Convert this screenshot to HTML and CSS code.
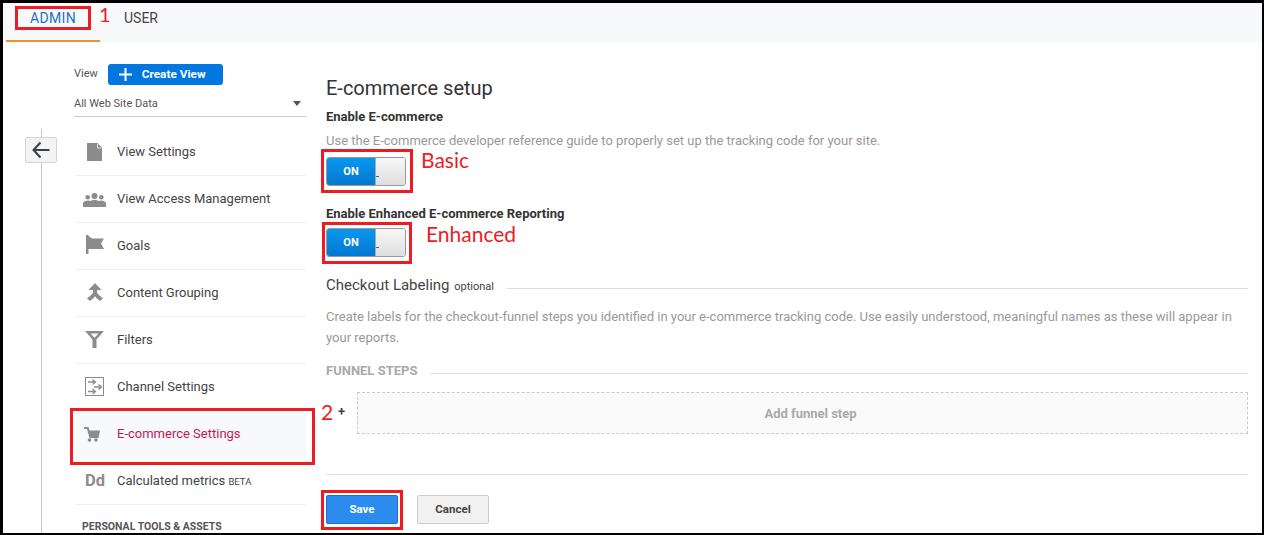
FILE: index.html
```html
<!DOCTYPE html>
<html lang="en">
<head>
	<meta charset="UTF-8">
	<title>E-commerce setup</title>
	<link rel="stylesheet" href="styles.css">
</head>
<body>
	<div class="frame">
		<div class="tabs">
			<a class="tab tab-on" href="#">ADMIN</a>
			<a class="tab tab-user" href="#">USER</a>
		</div>
		<div class="page">
			<div class="rail">
				<div class="rail-line"></div>
				<button class="back">
					<svg width="18" height="18" viewBox="0 0 18 18"><path d="M8.500 1.500 1.500 9l7 7.500M1.500 9H17.500" fill="none" stroke="#3c4043" stroke-width="2"/></svg>
				</button>
			</div>
			<div class="side">
				<div class="view-head">
					<span class="view-label">View</span>
					<a class="create" href="#">
						<svg width="13" height="13" viewBox="0 0 13 13"><path d="M6.500 0v13M0 6.500h13" stroke="#fff" stroke-width="2"/></svg>
						Create View
					</a>
				</div>
				<div class="select"><span>All Web Site Data</span><i class="caret"></i></div>
				<ul class="menu">
					<li>
						<svg class="ico" viewBox="0 0 24 20"><path d="M4 1h10.500L19 5.500V19H4z" fill="#8c8c8c"/><path d="M14.500 2v4H18" fill="none" stroke="#e6e6e6"/></svg>
						View Settings
					</li>
					<li>
						<svg class="ico" viewBox="0 0 24 20"><g fill="#8c8c8c"><circle cx="11.500" cy="7" r="3"/><circle cx="4.700" cy="8.300" r="2.300"/><circle cx="18.300" cy="8.300" r="2.300"/><path d="M0 18v-3.500C0 12.500 2.500 11.500 5 11.500c1 0 2 .2 2.500.5 1-.6 2.500-1 4-1s3 .4 4 1c.5-.3 1.500-.5 2.500-.5 2.500 0 5 1 5 3V18z"/></g></svg>
						View Access Management
					</li>
					<li>
						<svg class="ico" viewBox="0 0 24 20"><path d="M3 -1h2.500v1L9 2.500h12l-3 5 3 5.500H5.500v5H3z" fill="#8c8c8c"/></svg>
						Goals
					</li>
					<li>
						<svg class="ico" viewBox="0 0 24 20"><path d="M12 0l6.500 7H14v2.500c1 2 3 3.500 6 6L17 18c-2-1.500-4-3-5-5-1 2-3 3.500-5 5l-3-2.500c3-2.500 5-4 6-6V7H5.500z" fill="#8c8c8c"/></svg>
						Content Grouping
					</li>
					<li>
						<svg class="ico" viewBox="0 0 24 20"><path d="M2 1h19l-7.500 8.500V18h-4V9.500zM7.500 3.500l4 4.300 4-4.300z" fill="#8c8c8c" fill-rule="evenodd"/></svg>
						Filters
					</li>
					<li>
						<svg class="ico" viewBox="0 0 24 20"><rect x="2.500" y=".5" width="18" height="18" fill="none" stroke="#8c8c8c"/><path d="M5 5h7M9.500 2.500 12.500 5l-3 2.500M11 10h7M15.500 7.500 18.500 10l-3 2.500M5 14.500h7M9.500 12 12.500 14.500 9.500 17" fill="none" stroke="#8c8c8c" stroke-width="1.300"/></svg>
						Channel Settings
					</li>
					<li class="on">
						<svg class="ico" viewBox="0 0 24 20"><path d="M1 3h4.500l1 3.500H17L15.500 14h-9L4 5H1z" fill="#8c8c8c"/><circle cx="6.500" cy="16" r="1.800" fill="#8c8c8c"/><circle cx="13" cy="16" r="1.800" fill="#8c8c8c"/></svg>
						E-commerce Settings
					</li>
					<li>
						<span class="dd">Dd</span>
						<span>Calculated metrics <small>BETA</small></span>
					</li>
				</ul>
				<div class="tools">PERSONAL TOOLS &amp; ASSETS</div>
			</div>
			<div class="main">
				<h1>E-commerce setup</h1>
				<h2>Enable E-commerce</h2>
				<p class="hint">Use the E-commerce developer reference guide to properly set up the tracking code for your site.</p>
				<div class="toggle"><b>ON</b><span><i></i></span></div>
				<h2 class="second">Enable Enhanced E-commerce Reporting</h2>
				<div class="toggle"><b>ON</b><span><i></i></span></div>
				<div class="rule-head label-row"><span>Checkout Labeling <small>optional</small></span><i></i></div>
				<p class="hint wrap">Create labels for the checkout-funnel steps you identified in your e-commerce tracking code. Use easily understood, meaningful names as these will appear in your reports.</p>
				<div class="rule-head funnel-row"><strong>FUNNEL STEPS</strong><i></i></div>
				<div class="step-row">
					<span class="plus">+</span>
					<div class="add-step">Add funnel step</div>
				</div>
				<div class="actions">
					<button class="btn btn-save">Save</button>
					<button class="btn">Cancel</button>
				</div>
			</div>
		</div>

		<div class="mark m-admin"></div>
		<div class="mark m-side"></div>
		<div class="mark m-tog1"></div>
		<div class="mark m-tog2"></div>
		<div class="mark m-save"></div>
		<span class="note n-1">1</span>
		<span class="note n-2">2</span>
		<span class="note n-basic">Basic</span>
		<span class="note n-enh">Enhanced</span>
	</div>
</body>
</html>
```
FILE: styles.css
```css
* { box-sizing: border-box; margin: 0; padding: 0; }
html, body { height: 100%; }
body { font-family: Roboto, "Liberation Sans", sans-serif; color: #444; background: #000; overflow: hidden; }
ul { list-style: none; }
a { text-decoration: none; color: inherit; }

.frame { position: relative; width: 1264px; height: 535px; border: solid #000; border-width: 3px 2px 2px 3px; background: #fff; overflow: hidden; }

.tabs { display: flex; height: 39px; padding-left: 3px; background: #f8f9fa; }
.tab { width: 94px; font-size: 14px; line-height: 31px; text-align: center; color: #444; }
.tab-on { height: 39px; color: #1a73c8; letter-spacing: .3px; border-bottom: 2px solid #f98d2b; }
.tab-user { width: 82px; }

.page { display: flex; }
.rail { position: relative; width: 71px; flex: none; }
.rail-line { position: absolute; left: 38px; top: 87px; width: 1px; height: 420px; background: #c8c8c8; }
.back { position: absolute; left: 22px; top: 95px; width: 32px; height: 26px; display: flex; align-items: center; justify-content: center; background: #f3f3f3; border: 1px solid #d4d4d4; border-radius: 2px; }

.side { width: 232px; padding-top: 22px; flex: none; }
.view-head { display: flex; align-items: center; gap: 10px; height: 21px; }
.view-label { padding-bottom: 2px; font-size: 11px; color: #555; }
.create { display: flex; align-items: center; gap: 10px; width: 115px; height: 21px; padding: 0 0 1px 11px; font-size: 11.800px; font-weight: 700; color: #fff; background: #0277e0; border-radius: 3px; }
.select { display: flex; justify-content: space-between; align-items: center; height: 32px; padding: 5px 5px 0 0; font-size: 11px; color: #555; border-bottom: 1px solid #ccc; }
.caret { width: 0; height: 0; border: 4.500px solid transparent; border-top: 5px solid #555; border-bottom: 0; }

.menu { margin: 12px 0 0 2px; }
.menu li { display: flex; align-items: center; height: 47px; padding: 0 0 2px 7px; font-size: 13px; color: #444; border-bottom: 1px solid #eee; }
.menu li.on { color: #c2185b; background: #f8f9fa; border-bottom: 0; padding-bottom: 3px; }
.ico { width: 24px; height: 20px; margin: 2px 10px 0 0; flex: none; overflow: visible; }
.dd { width: 24px; margin-right: 10px; font-size: 16.500px; font-weight: 700; color: #8c8c8c; text-align: center; }
.menu small { font-size: 9.500px; }
.tools { height: 16px; margin: 15px 0 0 8px; font-size: 10.500px; font-weight: 700; line-height: 14px; color: #555; border-bottom: 1px solid #eee; }

.main { flex: 1; margin-left: 20px; margin-right: 14px; padding-top: 34px; }
h1 { font-size: 20px; font-weight: 400; line-height: 24px; color: #333; }
h2 { margin-top: 9px; font-size: 13px; font-weight: 700; line-height: 16px; color: #333; }
.hint { margin-top: 5px; font-size: 13px; line-height: 21px; color: #999; }
.toggle { display: flex; width: 80px; height: 29px; margin-top: 6px; border: 1px solid #999; border-radius: 3px; overflow: hidden; }
.toggle b { width: 48px; font-size: 11px; line-height: 27px; text-align: center; color: #fff; background: linear-gradient(#0a97f0, #0278cf); }
.toggle span { display: flex; align-items: flex-end; flex: 1; padding-bottom: 8px; background: linear-gradient(#f7f7f7, #dedede); border-left: 1px solid #aaa; }
.toggle i { width: 3px; height: 1px; background: #0278cf; }
.second { margin-top: 20px; }
.rule-head { display: flex; align-items: center; gap: 13px; }
.rule-head i { flex: 1; height: 1px; background: #ddd; }
.label-row { height: 18px; margin-top: 19px; font-size: 15px; color: #444; }
.label-row i { position: relative; top: 3px; }
.label-row small { margin-left: 1px; font-size: 11px; }
.wrap { margin-top: 12px; }
.funnel-row { height: 16px; margin-top: 14px; font-size: 13px; color: #aaa; }
.funnel-row i { position: relative; top: 3px; }
.step-row { position: relative; margin-top: 14px; margin-left: 31px; }
.plus { position: absolute; left: -19px; top: 12px; font-size: 13px; font-weight: 700; color: #444; }
.add-step { height: 42px; padding-left: 16px; font-size: 13px; font-weight: 700; line-height: 42px; text-align: center; color: #aaa; background: #fafafa; border: 1px dashed #ccc; }
.actions { display: flex; gap: 19px; margin-top: 40px; padding-top: 20px; border-top: 1px solid #ddd; }
.btn { width: 72px; height: 29px; padding-bottom: 2px; font: 700 11.500px Roboto, "Liberation Sans", sans-serif; color: #444; background: #f1f1f1; border: 1px solid #ccc; border-radius: 2px; }
.btn-save { color: #fff; background: #2b8bef; border-color: #1a73c8; }

.mark { position: absolute; border: 3px solid #ed1c24; }
.m-admin { left: 12px; top: 3px; width: 76px; height: 24px; }
.m-side { left: 67px; top: 405px; width: 245px; height: 57px; }
.m-tog1 { left: 318px; top: 146px; width: 92px; height: 44px; }
.m-tog2 { left: 319px; top: 219px; width: 90px; height: 42px; }
.m-save { left: 318px; top: 487px; width: 82px; height: 40px; }
.note { position: absolute; font-family: Lato, "Open Sans", sans-serif; color: #ed1c24; line-height: 1; }
.n-1 { left: 96px; top: 1px; font-size: 20px; }
.n-2 { left: 318px; top: 398px; font-size: 21px; }
.n-basic { left: 418px; top: 146px; font-size: 21px; }
.n-enh { left: 423px; top: 220px; font-size: 21px; }
```
